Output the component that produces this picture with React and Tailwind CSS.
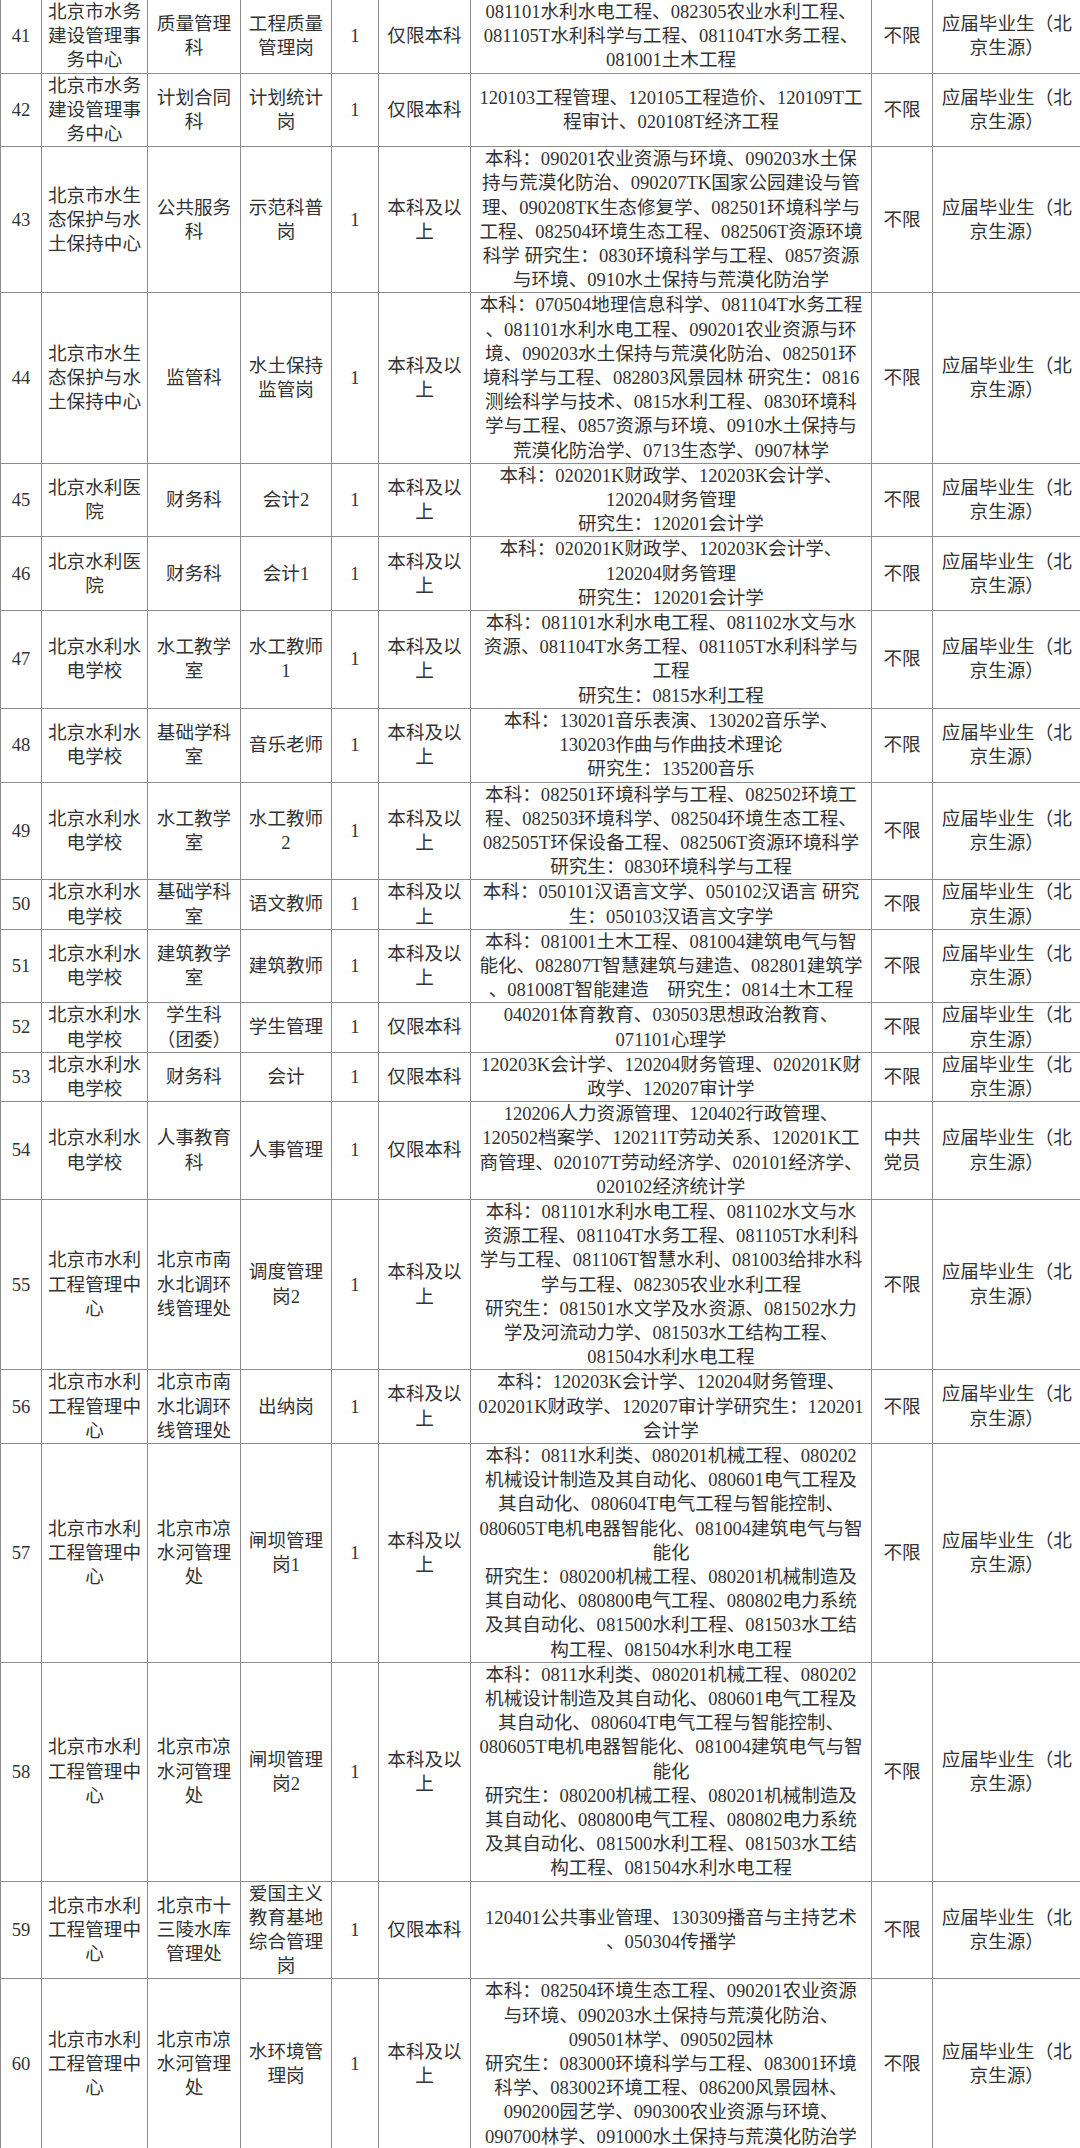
import React from 'react';

const other = ['应届毕业生（北', '京生源）'];
const kfx = ['本科及以', '上'];
const bk = ['仅限本科'];
const sl = ['北京市水利水', '电学校'];
const gl = ['北京市水利', '工程管理中', '心'];

const jd = [
  '本科：0811水利类、080201机械工程、080202',
  '机械设计制造及其自动化、080601电气工程及',
  '其自动化、080604T电气工程与智能控制、',
  '080605T电机电器智能化、081004建筑电气与智',
  '能化',
  '研究生：080200机械工程、080201机械制造及',
  '其自动化、080800电气工程、080802电力系统',
  '及其自动化、081500水利工程、081503水工结',
  '构工程、081504水利水电工程',
];

const rows = [
  {
    no: '41', unit: ['北京市水务', '建设管理事', '务中心'], dept: ['质量管理', '科'], pos: ['工程质量', '管理岗'], edu: bk,
    major: ['081101水利水电工程、082305农业水利工程、', '081105T水利科学与工程、081104T水务工程、', '081001土木工程'],
  },
  {
    no: '42', unit: ['北京市水务', '建设管理事', '务中心'], dept: ['计划合同', '科'], pos: ['计划统计', '岗'], edu: bk,
    major: ['120103工程管理、120105工程造价、120109T工', '程审计、020108T经济工程'],
  },
  {
    no: '43', unit: ['北京市水生', '态保护与水', '土保持中心'], dept: ['公共服务', '科'], pos: ['示范科普', '岗'], edu: kfx,
    major: [
      '本科：090201农业资源与环境、090203水土保',
      '持与荒漠化防治、090207TK国家公园建设与管',
      '理、090208TK生态修复学、082501环境科学与',
      '工程、082504环境生态工程、082506T资源环境',
      '科学 研究生：0830环境科学与工程、0857资源',
      '与环境、0910水土保持与荒漠化防治学',
    ],
  },
  {
    no: '44', unit: ['北京市水生', '态保护与水', '土保持中心'], dept: ['监管科'], pos: ['水土保持', '监管岗'], edu: kfx,
    major: [
      '本科：070504地理信息科学、081104T水务工程',
      '、081101水利水电工程、090201农业资源与环',
      '境、090203水土保持与荒漠化防治、082501环',
      '境科学与工程、082803风景园林 研究生：0816',
      '测绘科学与技术、0815水利工程、0830环境科',
      '学与工程、0857资源与环境、0910水土保持与',
      '荒漠化防治学、0713生态学、0907林学',
    ],
  },
  {
    no: '45', unit: ['北京水利医', '院'], dept: ['财务科'], pos: ['会计2'], edu: kfx,
    major: ['本科：020201K财政学、120203K会计学、', '120204财务管理', '研究生：120201会计学'],
  },
  {
    no: '46', unit: ['北京水利医', '院'], dept: ['财务科'], pos: ['会计1'], edu: kfx,
    major: ['本科：020201K财政学、120203K会计学、', '120204财务管理', '研究生：120201会计学'],
  },
  {
    no: '47', unit: ['北京水利水', '电学校'], dept: ['水工教学', '室'], pos: ['水工教师', '1'], edu: kfx,
    major: ['本科：081101水利水电工程、081102水文与水', '资源、081104T水务工程、081105T水利科学与', '工程', '研究生：0815水利工程'],
  },
  {
    no: '48', unit: ['北京水利水', '电学校'], dept: ['基础学科', '室'], pos: ['音乐老师'], edu: kfx,
    major: ['本科：130201音乐表演、130202音乐学、', '130203作曲与作曲技术理论', '研究生：135200音乐'],
  },
  {
    no: '49', unit: ['北京水利水', '电学校'], dept: ['水工教学', '室'], pos: ['水工教师', '2'], edu: kfx,
    major: [
      '本科：082501环境科学与工程、082502环境工',
      '程、082503环境科学、082504环境生态工程、',
      '082505T环保设备工程、082506T资源环境科学',
      '研究生：0830环境科学与工程',
    ],
  },
  {
    no: '50', unit: ['北京水利水', '电学校'], dept: ['基础学科', '室'], pos: ['语文教师'], edu: kfx,
    major: ['本科：050101汉语言文学、050102汉语言 研究', '生：050103汉语言文字学'],
  },
  {
    no: '51', unit: ['北京水利水', '电学校'], dept: ['建筑教学', '室'], pos: ['建筑教师'], edu: kfx,
    major: ['本科：081001土木工程、081004建筑电气与智', '能化、082807T智慧建筑与建造、082801建筑学', '、081008T智能建造　研究生：0814土木工程'],
  },
  {
    no: '52', unit: ['北京水利水', '电学校'], dept: ['学生科', '（团委）'], pos: ['学生管理'], edu: bk,
    major: ['040201体育教育、030503思想政治教育、', '071101心理学'],
  },
  {
    no: '53', unit: ['北京水利水', '电学校'], dept: ['财务科'], pos: ['会计'], edu: bk,
    major: ['120203K会计学、120204财务管理、020201K财', '政学、120207审计学'],
  },
  {
    no: '54', unit: ['北京水利水', '电学校'], dept: ['人事教育', '科'], pos: ['人事管理'], edu: bk, pol: ['中共', '党员'],
    major: [
      '120206人力资源管理、120402行政管理、',
      '120502档案学、120211T劳动关系、120201K工',
      '商管理、020107T劳动经济学、020101经济学、',
      '020102经济统计学',
    ],
  },
  {
    no: '55', unit: gl, dept: ['北京市南', '水北调环', '线管理处'], pos: ['调度管理', '岗2'], edu: kfx,
    major: [
      '本科：081101水利水电工程、081102水文与水',
      '资源工程、081104T水务工程、081105T水利科',
      '学与工程、081106T智慧水利、081003给排水科',
      '学与工程、082305农业水利工程',
      '研究生：081501水文学及水资源、081502水力',
      '学及河流动力学、081503水工结构工程、',
      '081504水利水电工程',
    ],
  },
  {
    no: '56', unit: gl, dept: ['北京市南', '水北调环', '线管理处'], pos: ['出纳岗'], edu: kfx,
    major: ['本科：120203K会计学、120204财务管理、', '020201K财政学、120207审计学研究生：120201', '会计学'],
  },
  { no: '57', unit: gl, dept: ['北京市凉', '水河管理', '处'], pos: ['闸坝管理', '岗1'], edu: kfx, major: jd },
  { no: '58', unit: gl, dept: ['北京市凉', '水河管理', '处'], pos: ['闸坝管理', '岗2'], edu: kfx, major: jd },
  {
    no: '59', unit: gl, dept: ['北京市十', '三陵水库', '管理处'], pos: ['爱国主义', '教育基地', '综合管理', '岗'], edu: bk,
    major: ['120401公共事业管理、130309播音与主持艺术', '、050304传播学'],
  },
  {
    no: '60', unit: gl, dept: ['北京市凉', '水河管理', '处'], pos: ['水环境管', '理岗'], edu: kfx,
    major: [
      '本科：082504环境生态工程、090201农业资源',
      '与环境、090203水土保持与荒漠化防治、',
      '090501林学、090502园林',
      '研究生：083000环境科学与工程、083001环境',
      '科学、083002环境工程、086200风景园林、',
      '090200园艺学、090300农业资源与环境、',
      '090700林学、091000水土保持与荒漠化防治学',
    ],
  },
];

function Cell({ lines }) {
  return (
    <td className="border-l border-b border-[#8c8c8c] p-0 text-center align-middle whitespace-nowrap overflow-hidden">
      {lines.map((l, i) => (
        <div key={i}>{l}</div>
      ))}
    </td>
  );
}

export default function App() {
  return (
    <div className="w-[1080px] bg-white text-[#333] font-['Liberation_Serif','Noto_Sans_CJK_SC',serif] text-[18.6px] leading-[24.2px]">
      <table className="w-[1080px] table-fixed border-collapse">
        <colgroup>
          <col className="w-[41px]" />
          <col className="w-[106px]" />
          <col className="w-[93px]" />
          <col className="w-[91px]" />
          <col className="w-[47px]" />
          <col className="w-[92px]" />
          <col className="w-[401px]" />
          <col className="w-[61px]" />
          <col className="w-[148px]" />
        </colgroup>
        <tbody>
          {rows.map((r) => (
            <tr key={r.no}>
              <Cell lines={[r.no]} />
              <Cell lines={r.unit} />
              <Cell lines={r.dept} />
              <Cell lines={r.pos} />
              <Cell lines={['1']} />
              <Cell lines={r.edu} />
              <Cell lines={r.major} />
              <Cell lines={r.pol || ['不限']} />
              <Cell lines={other} />
            </tr>
          ))}
        </tbody>
      </table>
    </div>
  );
}
